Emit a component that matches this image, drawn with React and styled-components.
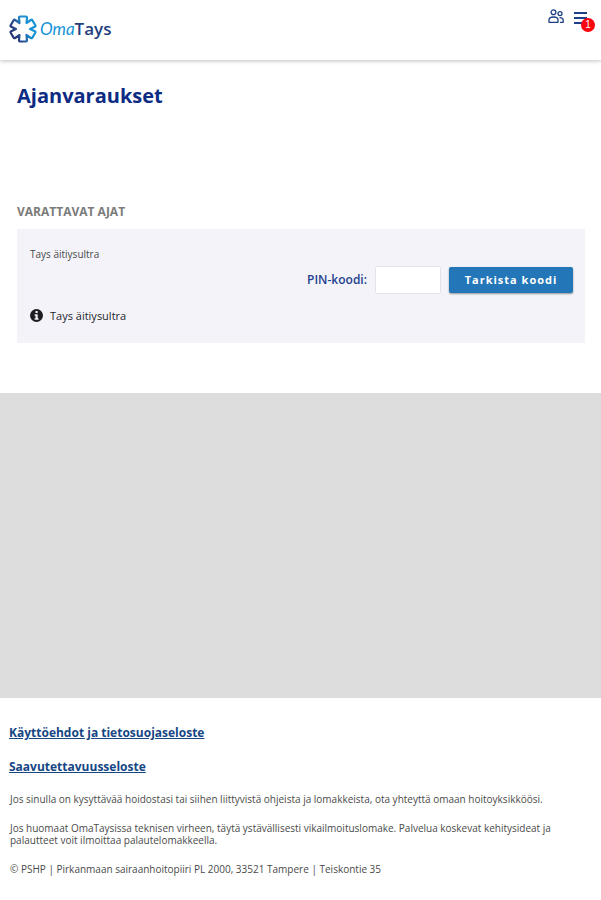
import React from 'react';
import styled, { createGlobalStyle } from 'styled-components';

const GlobalStyle = createGlobalStyle`
    * {
        box-sizing: border-box;
    }

    body {
        margin: 0;
        background: #fff;
        color: #4a4a4a;
        font-family: "Open Sans", "Noto Sans", sans-serif;
        font-size: 10px;
        line-height: 12px;
    }

    h1, h2, p {
        margin: 0;
    }
`;

const Header = styled.header`
    display: flex;
    justify-content: space-between;
    align-items: flex-start;
    height: 60px;
    padding: 0 12px 0 9px;
    box-shadow: 0 1px 4px rgba(0, 0, 0, 0.25);
`;

const Logo = styled.a`
    display: flex;
    align-items: center;
    gap: 3px;
    height: 58px;
    color: #1f3f7f;
    text-decoration: none;
`;

const LogoText = styled.span`
    font-size: 17px;
    line-height: 24px;
    font-weight: 600;
`;

const LogoScript = styled.span`
    color: #1593d6;
    font-family: Lato, sans-serif;
    font-style: italic;
    font-weight: 400;
`;

const Tools = styled.div`
    display: flex;
    gap: 10px;
    padding-top: 9px;
`;

const IconButton = styled.button`
    position: relative;
    display: flex;
    padding: 0;
    border: 0;
    background: none;
    color: #1d3f84;
    cursor: pointer;
`;

const Badge = styled.span`
    position: absolute;
    top: 9px;
    left: 7px;
    width: 14px;
    height: 14px;
    border-radius: 50%;
    background: #f90610;
    color: #fff;
    font-size: 10px;
    line-height: 14px;
    text-align: center;
`;

const Main = styled.main`
    padding: 22px 16px 50px 17px;
`;

const Title = styled.h1`
    color: #0c2b83;
    font-size: 20px;
    line-height: 28px;
    font-weight: 700;
`;

const SectionTitle = styled.h2`
    margin-top: 94px;
    color: #7b7b7b;
    font-size: 12px;
    line-height: 16px;
    font-weight: 700;
`;

const Panel = styled.section`
    margin-top: 9px;
    padding: 19px 12px 21px 13px;
    background: #f3f3f9;
`;

const PinForm = styled.form`
    display: flex;
    justify-content: flex-end;
    align-items: center;
    gap: 8px;
    margin: 6px 0 15px;
`;

const PinLabel = styled.label`
    color: #1f3f8f;
    font-size: 12px;
    font-weight: 600;
`;

const PinInput = styled.input`
    width: 66px;
    height: 28px;
    border: 1px solid #e3e3e8;
    border-radius: 2px;
    background: #fff;
`;

const SubmitButton = styled.button`
    width: 124px;
    height: 26px;
    padding: 0 0 2px;
    border: 0;
    border-radius: 2px;
    background: #2376b7;
    box-shadow: 0 1px 2px rgba(0, 0, 0, 0.4);
    color: #fff;
    font-family: inherit;
    font-size: 11px;
    font-weight: 700;
    letter-spacing: 1px;
    cursor: pointer;
`;

const InfoRow = styled.div`
    display: flex;
    align-items: center;
    gap: 7px;
    color: #26262b;
    font-size: 11px;
`;

const Filler = styled.div`
    height: 305px;
    background: #ddd;
`;

const Footer = styled.footer`
    padding: 27px 32px 22px 9px;
`;

const FooterLink = styled.a`
    display: table;
    margin-bottom: 18px;
    color: #164684;
    font-size: 12px;
    line-height: 16px;
    font-weight: 700;
`;

const FooterText = styled.p`
    padding-left: 1px;
    margin-bottom: 17px;
`;

const LogoMark = () => (
    <svg width="28" height="28" viewBox="0 0 28 28" fill="none" aria-hidden="true">
        <defs>
            <linearGradient id="mark" x1="4" y1="20" x2="24" y2="10" gradientUnits="userSpaceOnUse">
                <stop offset="0.1" stopColor="#24387a" />
                <stop offset="0.45" stopColor="#2767a8" />
                <stop offset="0.7" stopColor="#1a92d4" />
            </linearGradient>
        </defs>
        <path
            d="M11 1.5H17Q18 1.5 18 2.5L17.5 8L21.8 5Q22.8 4.4 23.4 5.4L26.3 10.3Q26.8 11.3 25.8 11.8L21 14L25.8 16.2Q26.8 16.7 26.3 17.7L23.4 22.6Q22.8 23.6 21.8 23L17.5 20L18 25.5Q18 26.5 17 26.5H11Q10 26.5 10 25.5L10.5 20L6.2 23Q5.2 23.6 4.6 22.6L1.7 17.7Q1.2 16.7 2.2 16.2L7 14L2.2 11.8Q1.2 11.3 1.7 10.3L4.6 5.4Q5.2 4.4 6.2 5L10.5 8L10 2.5Q10 1.5 11 1.5Z"
            stroke="url(#mark)"
            strokeWidth="2.2"
            strokeLinejoin="round"
        />
    </svg>
);

const PeopleIcon = () => (
    <svg width="16" height="15" viewBox="0 0 16 15" fill="none" stroke="currentColor" strokeWidth="1.3" aria-hidden="true">
        <circle cx="5.5" cy="3.3" r="2.4" />
        <path d="M1 13.3V11C1 9 2.5 8 5.5 8S10 9 10 11V13.3Z" strokeLinejoin="round" />
        <circle cx="12" cy="4.6" r="2" />
        <path d="M11.5 8.6C14 8.6 15.2 9.5 15.2 11.3V13.3H12" strokeLinejoin="round" />
    </svg>
);

const MenuIcon = () => (
    <svg width="15" height="15" viewBox="0 0 15 15" stroke="currentColor" strokeWidth="2" aria-hidden="true">
        <path d="M0 4H13M0 9H13M0 14H13" />
    </svg>
);

const InfoIcon = () => (
    <svg width="13" height="13" viewBox="0 0 13 13" aria-hidden="true">
        <circle cx="6.5" cy="6.5" r="6.5" fill="#1d1d22" />
        <path d="M5.5 2H7.7V4H5.5ZM4.6 5.2H7.7V9.2H8.6V10.7H4.6V9.2H5.5V6.7H4.6Z" fill="#f3f3f9" />
    </svg>
);

const App = () => {
    return (
        <>
            <GlobalStyle />
            <Header>
                <Logo href="#">
                    <LogoMark />
                    <LogoText><LogoScript>Oma</LogoScript>Tays</LogoText>
                </Logo>
                <Tools>
                    <IconButton type="button" aria-label="Käyttäjät">
                        <PeopleIcon />
                    </IconButton>
                    <IconButton type="button" aria-label="Valikko">
                        <MenuIcon />
                        <Badge>1</Badge>
                    </IconButton>
                </Tools>
            </Header>
            <Main>
                <Title>Ajanvaraukset</Title>
                <SectionTitle>VARATTAVAT AJAT</SectionTitle>
                <Panel>
                    <p>Tays äitiysultra</p>
                    <PinForm onSubmit={(e) => e.preventDefault()}>
                        <PinLabel htmlFor="pin">PIN-koodi:</PinLabel>
                        <PinInput id="pin" type="text" />
                        <SubmitButton type="submit">Tarkista koodi</SubmitButton>
                    </PinForm>
                    <InfoRow>
                        <InfoIcon />
                        <span>Tays äitiysultra</span>
                    </InfoRow>
                </Panel>
            </Main>
            <Filler />
            <Footer>
                <FooterLink href="#">Käyttöehdot ja tietosuojaseloste</FooterLink>
                <FooterLink href="#">Saavutettavuusseloste</FooterLink>
                <FooterText>
                    Jos sinulla on kysyttävää hoidostasi tai siihen liittyvistä ohjeista ja lomakkeista, ota yhteyttä omaan hoitoyksikköösi.
                </FooterText>
                <FooterText>
                    Jos huomaat OmaTaysissa teknisen virheen, täytä ystävällisesti vikailmoituslomake. Palvelua koskevat kehitysideat ja palautteet voit ilmoittaa palautelomakkeella.
                </FooterText>
                <FooterText>© PSHP | Pirkanmaan sairaanhoitopiiri PL 2000, 33521 Tampere | Teiskontie 35</FooterText>
            </Footer>
        </>
    )
}

export default App
